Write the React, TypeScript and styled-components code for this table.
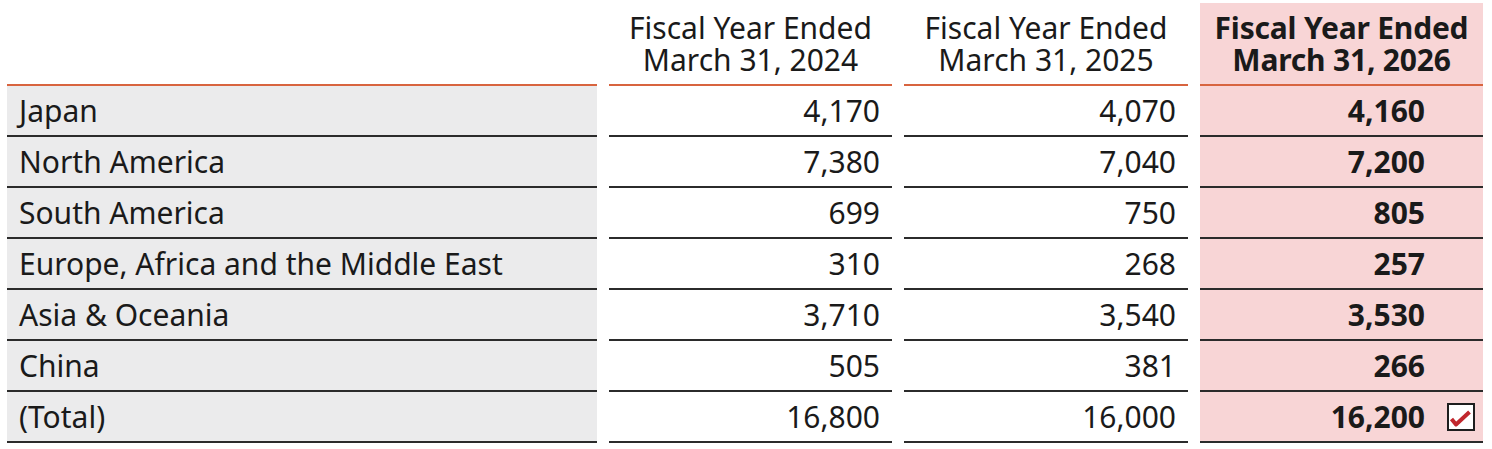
import { Fragment } from 'react';
import styled, { createGlobalStyle } from 'styled-components';

const GlobalStyle = createGlobalStyle`
  html, body {
    margin: 0;
    padding: 0;
    background: #ffffff;
  }
  body {
    font-family: "Noto Sans", "Open Sans", sans-serif;
    color: #1a1a1a;
  }
`;

const COLORS = {
  gray: '#ebebec',
  pink: '#f8d5d6',
  orange: '#d8643f',
  rule: '#2b2b2b',
  check: '#c1272d',
};

const Page = styled.div`
  padding: 3px 9px 0 7px;
`;

const Table = styled.div`
  display: grid;
  grid-template-columns: 590px 283px 284px 283px;
  column-gap: 12px;
`;

const HeadCell = styled.div<{ $highlight?: boolean }>`
  height: 83px;
  display: flex;
  flex-direction: column;
  align-items: center;
  justify-content: center;
  padding-top: 1px;
  box-sizing: border-box;
  font-size: 30px;
  line-height: 32px;
  font-weight: ${p => (p.$highlight ? 700 : 400)};
  letter-spacing: ${p => (p.$highlight ? '-0.2px' : '0')};
  background: ${p => (p.$highlight ? COLORS.pink : 'transparent')};
  border-bottom: 2px solid ${COLORS.orange};
  text-align: center;
  white-space: nowrap;
`;

const LabelCell = styled.div`
  height: 49px;
  display: flex;
  align-items: center;
  padding-left: 12px;
  font-size: 30px;
  background: ${COLORS.gray};
  border-bottom: 2px solid ${COLORS.rule};
`;

const ValueCell = styled.div<{ $highlight?: boolean }>`
  height: 49px;
  display: flex;
  align-items: center;
  justify-content: flex-end;
  padding-right: ${p => (p.$highlight ? '58px' : '12px')};
  position: relative;
  font-size: 30px;
  font-weight: ${p => (p.$highlight ? 700 : 400)};
  background: ${p => (p.$highlight ? COLORS.pink : 'transparent')};
  border-bottom: 2px solid ${COLORS.rule};
`;

const CheckBox = styled.svg`
  position: absolute;
  right: 8px;
  top: 50%;
  transform: translateY(-50%);
`;

const rows: [string, string, string, string][] = [
  ['Japan', '4,170', '4,070', '4,160'],
  ['North America', '7,380', '7,040', '7,200'],
  ['South America', '699', '750', '805'],
  ['Europe, Africa and the Middle East', '310', '268', '257'],
  ['Asia & Oceania', '3,710', '3,540', '3,530'],
  ['China', '505', '381', '266'],
  ['(Total)', '16,800', '16,000', '16,200'],
];

const Check = () => (
  <CheckBox width="28" height="28" viewBox="0 0 28 28">
    <rect x="1" y="1" width="26" height="26" fill="#fff" stroke="#1e1e1e" strokeWidth="2" />
    <path
      d="M4.5 16 L9 21.5 L22.5 9"
      fill="none"
      stroke={COLORS.check}
      strokeWidth="4"
      strokeLinejoin="round"
    />
  </CheckBox>
);

export default function App() {
  return (
    <Page>
      <GlobalStyle />
      <Table>
        <HeadCell />
        <HeadCell>
          <span>Fiscal Year Ended</span>
          <span>March 31, 2024</span>
        </HeadCell>
        <HeadCell>
          <span>Fiscal Year Ended</span>
          <span>March 31, 2025</span>
        </HeadCell>
        <HeadCell $highlight>
          <span>Fiscal Year Ended</span>
          <span>March 31, 2026</span>
        </HeadCell>
        {rows.map(([label, a, b, c], i) => (
          <Fragment key={label}>
            <LabelCell>{label}</LabelCell>
            <ValueCell>{a}</ValueCell>
            <ValueCell>{b}</ValueCell>
            <ValueCell $highlight>
              {c}
              {i === rows.length - 1 && <Check />}
            </ValueCell>
          </Fragment>
        ))}
      </Table>
    </Page>
  );
}
